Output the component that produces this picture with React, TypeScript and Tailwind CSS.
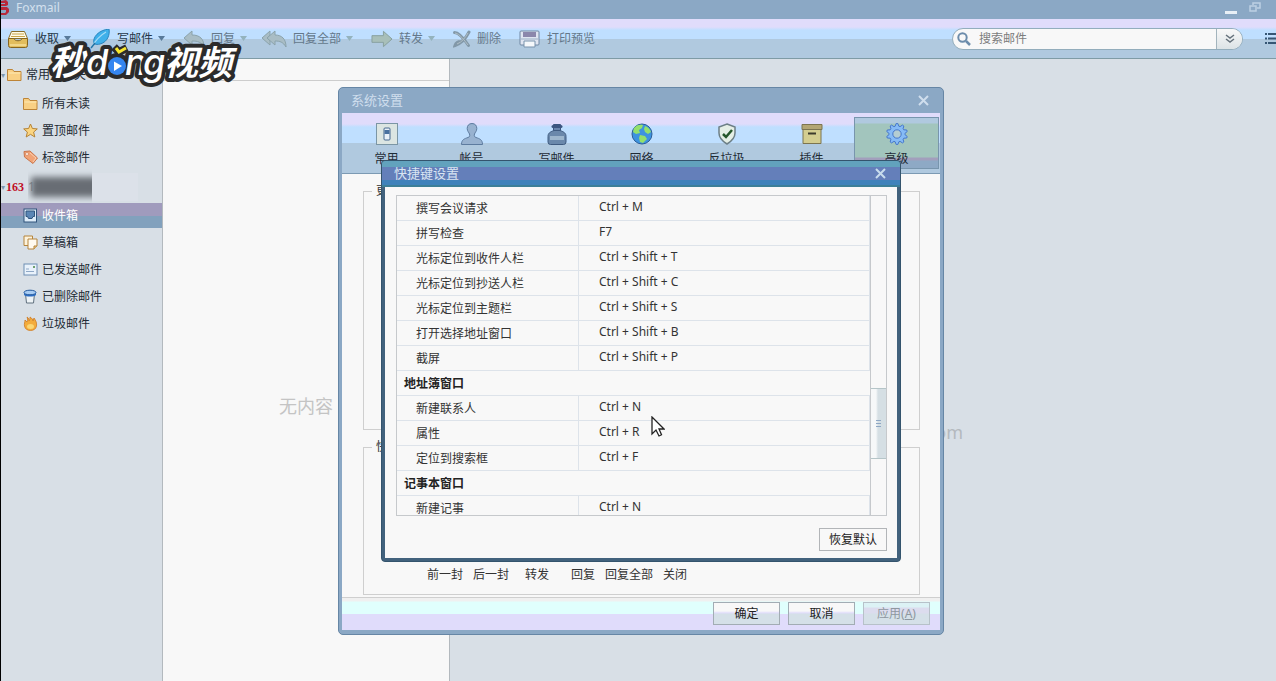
import type { ReactNode } from "react";

type MenuItem = {
  label: string;
  icon: ReactNode;
  caret?: boolean;
  muted?: boolean;
};

type Shortcut = {
  label: string;
  keys?: string;
};

const TrayIcon = () => (
  <svg width="22" height="20" viewBox="0 0 22 20">
    <path d="M4.5 2.5h13l3 7h-19z" fill="#fffbe8" stroke="#8a6d2a" />
    <path d="M5 5h12M4 7.500h14" stroke="#c9a44a" />
    <path d="M1.500 9.500h5.500c.5 3 7.500 3 8 0h5.500v7q0 2-2 2h-15q-2 0-2-2z" fill="#e2bd5c" stroke="#86651f" />
    <path d="M3 16h16" stroke="#f6e09a" strokeWidth="1.500" />
  </svg>
);

const FeatherIcon = () => (
  <svg width="22" height="20" viewBox="0 0 22 20">
    <path d="M5 15C3 8 10 1 20 0c1 5-1 13-9 15-2 .6-4 .4-6 0z" fill="#3fb0ea" stroke="#2884bd" />
    <path d="M2 19C6 12 10 7 17 3" fill="none" stroke="#a5dcf7" strokeWidth="1.200" />
    <path d="M2 19l4-5" stroke="#2673a5" strokeWidth="1.500" />
  </svg>
);

const ReplyIcon = () => (
  <svg width="22" height="18" viewBox="0 0 22 18">
    <path d="M9 1v4c8 0 12 4 12 12-3-5-6-6-12-6v4L1 8z" fill="#a9bdc5" stroke="#8ba3ab" />
  </svg>
);

const ReplyAllIcon = () => (
  <svg width="26" height="18" viewBox="0 0 26 18" className="-ml-1">
    <path d="M9 1L1 8l8 7v-4L6 8l3-3z" fill="#a9bdc5" stroke="#8ba3ab" />
    <path d="M14 1v4c7 0 11 4 11 12-3-5-6-6-11-6v4L6 8z" fill="#a9bdc5" stroke="#8ba3ab" />
  </svg>
);

const ForwardIcon = () => (
  <svg width="23" height="18" viewBox="0 0 23 18">
    <path d="M1 5.500h12V1l9 8-9 8v-4.500H1z" fill="#a8bfb9" stroke="#86a09d" />
  </svg>
);

const DeleteIcon = () => (
  <svg width="18" height="18" viewBox="0 0 18 18">
    <path d="M1.500 2.500c5 0 10 7 14 13M16 2C13 8 9 13 2 15.500c1-3 4-4 6-4" fill="none" stroke="#8298a8" strokeWidth="3" strokeLinecap="round" />
    <path d="M2 3c5 1 9 7 13 12M15 3C12 8 9 12 4 14" fill="none" stroke="#b1bfc6" />
  </svg>
);

const PrintIcon = () => (
  <svg width="22" height="18" viewBox="0 0 22 18">
    <rect x="1" y="1" width="19" height="14" rx="1" fill="#dfe5f1" stroke="#6e86a2" />
    <path d="M4 2h13v5H4z" fill="#8b87ab" />
    <path d="M2 9h17" stroke="#9bb0c4" />
    <path d="M5 11h11v6H5z" fill="#f5f8fb" stroke="#7893ad" />
  </svg>
);

const FolderIcon = () => (
  <svg width="15" height="14" viewBox="0 0 15 14">
    <path d="M.5 12.500v-11h5l1.500 2h7v9z" fill="#f9d084" stroke="#bd8437" />
    <path d="M1.500 5h12" stroke="#fde9b4" />
  </svg>
);

const StarIcon = () => (
  <svg width="15" height="15" viewBox="0 0 15 15">
    <path d="M7.500 1l1.900 4.500 4.900.4-3.700 3.200 1.200 4.900-4.300-2.700L3.200 14l1.200-4.900L.7 5.900l4.900-.4z" fill="#fbd581" stroke="#b58335" />
  </svg>
);

const TagIcon = () => (
  <svg width="15" height="15" viewBox="0 0 15 15">
    <path d="M1 1.500l6-.5 7.500 7-4.500 5.500L1.500 7z" fill="#f1a376" stroke="#c9754c" />
    <path d="M7 3l6 5-3 4" fill="none" stroke="#fbd0b0" />
    <circle cx="4" cy="4" r="1.500" fill="#fff4ec" stroke="#c9754c" strokeWidth=".6" />
  </svg>
);

const InboxIcon = () => (
  <svg width="15" height="15" viewBox="0 0 15 15">
    <rect x="1" y="1" width="12.500" height="13" fill="#dcebf8" stroke="#31547d" />
    <path d="M3 3h8.500v5.500h-1.500l-1 2h-3.500l-1-2H3z" fill="#5b86b5" stroke="#31547d" />
  </svg>
);

const DraftIcon = () => (
  <svg width="15" height="15" viewBox="0 0 15 15">
    <path d="M1 1h8.500v9.500H1z" fill="#fdf3dc" stroke="#b5843c" />
    <path d="M5 4h9v7l-3 3H5z" fill="#fffaf0" stroke="#b5843c" />
    <path d="M14 11h-3v3" fill="#e9c98c" stroke="#b5843c" />
  </svg>
);

const SentIcon = () => (
  <svg width="15" height="13" viewBox="0 0 15 13">
    <rect x="1" y="1" width="13" height="11" fill="#e9f2fb" stroke="#6f8fb3" />
    <path d="M3 6h3M3 8.500h8" stroke="#8fa8c6" />
    <path d="M10 3h2v2h-2z" fill="#6fa06c" />
  </svg>
);

const TrashIcon = () => (
  <svg width="15" height="15" viewBox="0 0 15 15">
    <path d="M2.500 5l1 9h7l1-9z" fill="#eef3f6" stroke="#60707e" />
    <path d="M1 3.500v2.500c2 2 10 2 12 0V3.500z" fill="#2f70c6" />
    <ellipse cx="7" cy="3.500" rx="6" ry="2.300" fill="#a9cdf4" stroke="#245a9e" />
  </svg>
);

const FlameIcon = () => (
  <svg width="15" height="15" viewBox="0 0 15 15">
    <path d="M4 1c2 1 2 3 2 4 1-1 1-3 1-4 2 1 3 3 3 4l1-3c2 3 3 5 2.500 8-.5 3-3 4.500-6 4.500S2 13 1.500 10C1 8 2 6 2 4l2 2c.8-2 .6-4 0-5z" fill="#f3ac3c" stroke="#cf7c24" strokeWidth=".8" />
    <ellipse cx="7.500" cy="10.500" rx="3.500" ry="2.500" fill="#fbd774" />
  </svg>
);

const CloseIcon = () => (
  <svg width="11" height="11" viewBox="0 0 11 11">
    <path d="M1 1l9 9M10 1l-9 9" stroke="currentColor" strokeWidth="2" />
  </svg>
);

const GEAR_TEETH = 10;

// four points per tooth: two on the rim, two on the root circle
const gearPoints = Array.from({ length: GEAR_TEETH * 4 }, (_, i) => {
  const radius = i % 4 < 2 ? 10.500 : 8;
  const angle = ((i - 0.500) / (GEAR_TEETH * 4)) * Math.PI * 2 - Math.PI / 2;
  return `${(12 + radius * Math.cos(angle)).toFixed(2)},${(12 + radius * Math.sin(angle)).toFixed(2)}`;
}).join(" ");

const menuItems: MenuItem[] = [
  { label: "收取", icon: <TrayIcon />, caret: true },
  { label: "写邮件", icon: <FeatherIcon />, caret: true },
  { label: "回复", icon: <ReplyIcon />, caret: true, muted: true },
  { label: "回复全部", icon: <ReplyAllIcon />, caret: true, muted: true },
  { label: "转发", icon: <ForwardIcon />, caret: true, muted: true },
  { label: "删除", icon: <DeleteIcon />, muted: true },
  { label: "打印预览", icon: <PrintIcon />, muted: true }
];

const commonFolders = [
  { label: "所有未读", icon: <FolderIcon /> },
  { label: "置顶邮件", icon: <StarIcon /> },
  { label: "标签邮件", icon: <TagIcon /> }
];

const mailFolders = [
  { label: "收件箱", icon: <InboxIcon />, active: true },
  { label: "草稿箱", icon: <DraftIcon /> },
  { label: "已发送邮件", icon: <SentIcon /> },
  { label: "已删除邮件", icon: <TrashIcon /> },
  { label: "垃圾邮件", icon: <FlameIcon /> }
];

const settingTabs = [
  {
    label: "常用",
    icon: (
      <>
        <rect x="1.500" y="1.500" width="21" height="21" fill="#dbe5e2" stroke="#7b96a5" />
        <rect x="9" y="6" width="6" height="12" rx="1" fill="#e8f0f8" stroke="#47688f" />
        <path d="M9.500 8h5v4h-5z" fill="#48709f" />
      </>
    )
  },
  {
    label: "帐号",
    icon: (
      <path
        d="M12 1.500c3.300 0 4.800 2.300 4.800 5S15 10.500 14.500 12c-.6 2 0 3 1.500 3.500 3.500 1.200 6.500 2 6.500 7h-21c0-5 3-5.800 6.500-7 1.500-.5 2.100-1.500 1.500-3.500C9 10.500 7.200 9.200 7.200 6.500s1.500-5 4.800-5z"
        fill="#98b2d0"
        stroke="#5d7b9f"
      />
    )
  },
  {
    label: "写邮件",
    icon: (
      <>
        <path d="M8.500 2.500h7v6h-7z" fill="#6a86ad" stroke="#3c5680" />
        <path d="M9 8.500h6c4.500 1.500 6 3 6 6V20q0 2.500-2.500 2.500h-13Q3 22.500 3 20v-5.500c0-3 1.500-4.500 6-6z" fill="#6a88ab" stroke="#3f5b80" />
        <path d="M8 4.500h8" stroke="#3c5680" strokeWidth="3" strokeLinecap="round" />
        <path d="M5 14h14v4H5z" fill="#9db6cd" />
      </>
    )
  },
  {
    label: "网络",
    icon: (
      <>
        <circle cx="12" cy="12" r="10" fill="#3d93e0" stroke="#2b5d96" />
        <path d="M4 6c2-3 6-4 9-3l-1 3-3 2 1 3-4 1-3-2zM15 4c3 1 5 3 6 6l-3 2-3-2-1-3zM10 13l5 1 2 3-4 4-3-1-1-4z" fill="#93e06c" />
      </>
    )
  },
  {
    label: "反垃圾",
    icon: (
      <>
        <path d="M12 2l8 3v6c0 5-3 8-8 11-5-3-8-6-8-11V5z" fill="#e5efe6" stroke="#6d7f86" strokeWidth="1.500" />
        <path d="M8 12l3 3 6-7" fill="none" stroke="#26572c" strokeWidth="2.500" />
      </>
    )
  },
  {
    label: "插件",
    icon: (
      <>
        <path d="M3 7h18v14.500H3z" fill="#d3cd90" stroke="#7c7550" />
        <path d="M2 2.500h20v5H2z" fill="#b3a673" stroke="#7c7550" />
        <path d="M8 11.500h8" stroke="#3c3a2c" strokeWidth="2" />
      </>
    )
  },
  {
    label: "高级",
    icon: (
      <>
        <polygon points={gearPoints} fill="#86bbf6" stroke="#4577cc" strokeLinejoin="round" />
        <circle cx="12" cy="12" r="4.200" fill="#b4cdd2" stroke="#4577cc" />
      </>
    ),
    active: true
  }
];

const shortcuts: Shortcut[] = [
  { label: "撰写会议请求", keys: "Ctrl + M" },
  { label: "拼写检查", keys: "F7" },
  { label: "光标定位到收件人栏", keys: "Ctrl + Shift + T" },
  { label: "光标定位到抄送人栏", keys: "Ctrl + Shift + C" },
  { label: "光标定位到主题栏", keys: "Ctrl + Shift + S" },
  { label: "打开选择地址窗口", keys: "Ctrl + Shift + B" },
  { label: "截屏", keys: "Ctrl + Shift + P" },
  { label: "地址簿窗口" },
  { label: "新建联系人", keys: "Ctrl + N" },
  { label: "属性", keys: "Ctrl + R" },
  { label: "定位到搜索框", keys: "Ctrl + F" },
  { label: "记事本窗口" },
  { label: "新建记事", keys: "Ctrl + N" }
];

function TitleBar() {
  return (
    <header className="flex h-[19px] shrink-0 items-center bg-[#8ba8c5] pb-1 text-[#d3e0ee]">
      <svg width="8" height="15" viewBox="0 0 8 15" className="mr-[7px]">
        <path d="M0 1l5-1 2 2v3L5 6H0V4h4V3H0zM0 7h6l2 2v3l-3 3H0v-2h4l1-1v-2H0z" fill="#b8283a" />
      </svg>
      <span className="text-[12px] leading-4">Foxmail</span>
      <div className="ml-auto flex items-center gap-3 pr-[15px]">
        <button aria-label="最小化" className="flex h-4 w-3 items-end pb-[2px]">
          <span className="h-[3px] w-full bg-[#e8eff6]" />
        </button>
        <button aria-label="还原">
          <svg width="12" height="11" viewBox="0 0 12 11" fill="none" stroke="#bdd0e3" strokeWidth="1.500">
            <path d="M4 3V1h7v5H8" />
            <path d="M1 4h6v5H1z" />
          </svg>
        </button>
      </div>
    </header>
  );
}

function Toolbar() {
  return (
    <div className="flex h-10 shrink-0 items-center border-b border-[#7f9ba5] bg-[linear-gradient(#e0dcfb_0_8px,#bfdfff_11px_20px,#b0c9df_20px)] pl-[6px]">
      <nav className="flex items-center gap-[18px]">
        {menuItems.map((item) => (
          <button
            key={item.label}
            className={`flex shrink-0 items-center text-[12px] leading-4 ${item.muted ? "text-[#64788a]" : "text-[#26384a]"}`}
          >
            <span className={`mr-[6px] flex ${item.label === "删除" ? "w-[18px]" : "w-[22px]"}`}>{item.icon}</span>
            {item.label}
            {item.caret ? (
              <svg width="7" height="5" viewBox="0 0 7 5" className="ml-[5px]">
                <path d="M0 0h7L3.500 5z" fill={item.muted ? "#94b3bd" : "#587a9a"} />
              </svg>
            ) : null}
          </button>
        ))}
      </nav>
      <div className="ml-auto flex h-[22px] w-[291px] items-center overflow-hidden rounded-full border border-[#93adbc] bg-[#f8f8f8]">
        <svg width="14" height="14" viewBox="0 0 14 14" className="ml-[4px] shrink-0">
          <circle cx="5.500" cy="5.500" r="4.200" fill="none" stroke="#6c8cab" strokeWidth="2" />
          <path d="M9 9l4 4" stroke="#6c8cab" strokeWidth="2.500" />
        </svg>
        <input
          aria-label="搜索邮件"
          placeholder="搜索邮件"
          className="ml-2 min-w-0 flex-1 bg-transparent text-[12px] leading-4 outline-none placeholder:text-[#7d7d7d]"
        />
        <button
          aria-label="搜索选项"
          className="flex h-full w-[26px] items-center justify-center border-l border-[#a3b4bd] bg-[linear-gradient(#f8f8f8,#dce3e6)]"
        >
          <svg width="10" height="10" viewBox="0 0 10 10" fill="none" stroke="#66727c" strokeWidth="1.500">
            <path d="M1 1l4 3 4-3M1 5l4 3 4-3" />
          </svg>
        </button>
      </div>
      <button aria-label="菜单" className="ml-[21px] shrink-0">
        <svg width="12" height="13" viewBox="0 0 12 13" stroke="#365674" strokeWidth="2">
          <path d="M1 2h2M4 2h8M1 6.500h2M4 6.500h8M1 11h2M4 11h8" />
        </svg>
      </button>
    </div>
  );
}

function FolderRow({ label, icon, active = false }: { label: string; icon: ReactNode; active?: boolean }) {
  return (
    <li className="py-px">
      <a
        href="#"
        className={`flex h-[25px] items-center gap-1 pl-[22px] text-[12px] leading-4 ${
          active ? "bg-[linear-gradient(#a09bbd_0_50%,#82a1bd_50%)] text-white" : "text-[#222a34]"
        }`}
      >
        <span className="w-[15px]">{icon}</span>
        {label}
      </a>
    </li>
  );
}

function Sidebar() {
  return (
    <aside className="w-[162px] shrink-0 border-r border-[#b3b9be]">
      <div className="flex h-[31px] items-center text-[12px] leading-4 text-[#222a34]">
        <span className="w-[6px] text-[8px] text-[#7f97ad]">▾</span>
        <span className="mr-1 w-[15px]">
          <FolderIcon />
        </span>
        常用文件夹
      </div>
      <ul>
        {commonFolders.map((folder) => (
          <FolderRow key={folder.label} {...folder} />
        ))}
      </ul>
      <div className="flex h-[31px] items-center">
        <span className="w-[5px] text-[8px] text-[#7f97ad]">▾</span>
        <span className="font-['Liberation_Serif'] text-[12px] font-bold leading-4 text-[#c01028]">163</span>
        <span className="ml-1 flex flex-1 items-center">
          <span className="flex w-[64px] items-center overflow-x-clip text-[12px] leading-4 text-[#8a8f96]">
            1
            <span className="-ml-1 h-5 w-20 shrink-0 bg-[#686d74] blur-[3px]" />
          </span>
          <span className="h-7 w-[46px] bg-[#dce1e9]" />
        </span>
      </div>
      <ul>
        {mailFolders.map((folder) => (
          <FolderRow key={folder.label} {...folder} />
        ))}
      </ul>
    </aside>
  );
}

function ShortcutDialog() {
  return (
    <section
      aria-label="快捷键设置"
      className="absolute left-[380px] top-[160px] w-[520px] rounded-[4px] border border-[#34546d] bg-[#42627d]"
    >
      <div className="flex h-[26px] items-center justify-between rounded-t-[3px] border-b-2 border-[#3c7f98] bg-[linear-gradient(#62a2bd_0_6px,#647fba_6px_19px,#3f82bb_19px)] pl-3 pr-[14px] text-[#d9e5f2]">
        <h2 className="text-[13px] leading-4">快捷键设置</h2>
        <button aria-label="关闭" className="text-[#c8dced]">
          <CloseIcon />
        </button>
      </div>
      <div className="mx-[3px] mb-[3px] bg-[#f8f8f8] pb-[7px] pl-[11px] pr-[10px] pt-2">
        <div className="flex h-[321px] overflow-hidden border border-[#c6c9cc]">
          <table className="h-fit flex-1 table-fixed border-separate border-spacing-0 text-[12px] leading-4 text-[#333]">
            <colgroup>
              <col className="w-[182px]" />
              <col />
            </colgroup>
            <tbody>
              {shortcuts.map((item, index) =>
                item.keys ? (
                  <tr key={index} className="h-[25px]">
                    <td className="border-b border-r border-[#dde3ea] pb-0 pl-[19px] pt-px">{item.label}</td>
                    <td className="border-b border-r border-[#dde3ea] pb-[2px] pl-5 pt-0">{item.keys}</td>
                  </tr>
                ) : (
                  <tr key={index} className="h-[25px]">
                    <th colSpan={2} className="border-b border-[#dde3ea] pb-0 pl-[7px] pt-px text-left font-bold text-[#222]">
                      {item.label}
                    </th>
                  </tr>
                )
              )}
            </tbody>
          </table>
          <div className="w-4 border-l border-[#c6c9cc] pt-[192px]">
            <div className="flex h-[71px] flex-col items-center justify-center gap-[2px] border-y border-[#b5c5c8] bg-[linear-gradient(90deg,#f6f8f9_0_5px,#d5dfe4_7px)]">
              <span className="h-px w-[5px] bg-[#8ea7c4]" />
              <span className="h-px w-[5px] bg-[#8ea7c4]" />
              <span className="h-px w-[5px] bg-[#8ea7c4]" />
            </div>
          </div>
        </div>
        <div className="mt-3 flex justify-end">
          <button className="h-[23px] w-[68px] border border-[#b2b5b8] bg-[#f8f8f8] text-[12px] leading-4 text-[#222]">
            恢复默认
          </button>
        </div>
      </div>
    </section>
  );
}

function SettingsDialog() {
  return (
    <section
      aria-label="系统设置"
      className="absolute left-[337px] top-[87px] w-[606px] rounded-[5px] border border-[#6686a5] bg-[#8ba8c5] px-[3px] pb-1"
    >
      <div className="flex h-[25px] items-center justify-between pb-px pl-[9px] pr-[11px] text-[#cfdeed]">
        <h2 className="text-[13px] leading-4">系统设置</h2>
        <button aria-label="关闭">
          <CloseIcon />
        </button>
      </div>
      <div
        role="tablist"
        className="grid h-[61px] grid-cols-7 border-b border-[#7c9ab3] bg-[linear-gradient(#e0dcfb_0_11px,#bfdfff_14px_30px,#b0c9df_30px)] pl-[2px] pr-px pt-1"
      >
        {settingTabs.map((tab) => (
          <button
            key={tab.label}
            role="tab"
            aria-selected={!!tab.active}
            className={`flex h-[52px] flex-col items-center border pt-1 text-[12px] leading-4 text-[#1f2b36] ${
              tab.active
                ? "border-[#7895ad] bg-[linear-gradient(#b0c9df_0_5px,#a2c5bd_6px_39px,#a29fbc_40px_42px,#8ea9c5_43px)]"
                : "border-transparent"
            }`}
          >
            <svg width="24" height="24" viewBox="0 0 24 24" className="mb-[5px] shrink-0">
              {tab.icon}
            </svg>
            {tab.label}
          </button>
        ))}
      </div>
      <div className="bg-[#f8f8f8] pb-[2px] pl-[21px] pr-5 pt-[9px] text-[12px] leading-4 text-[#333]">
        <fieldset className="h-[247px] border border-[#cfcfcf] px-2">
          <legend className="px-1">更新设置</legend>
        </fieldset>
        <fieldset className="mt-[9px] h-[156px] border border-[#cfcfcf] px-2">
          <legend className="px-1">快捷键</legend>
          <div className="ml-[50px] grid w-[276px] grid-cols-6 pt-28">
            {["前一封", "后一封", "转发", "回复", "回复全部", "关闭"].map((name) => (
              <span key={name} className="flex justify-center whitespace-nowrap">
                {name}
              </span>
            ))}
          </div>
        </fieldset>
      </div>
      <div className="flex h-[33px] justify-end gap-2 border-t border-[#cfcfcf] bg-[linear-gradient(#f0f0f0_0_3px,#e0fffd_4px_16px,#e0dcfb_16px)] pr-[10px] pt-1 text-[12px] leading-4 text-[#222]">
        <button className="h-[23px] w-[67px] border border-[#a2acb4] bg-[linear-gradient(#f8f8f8_0_8px,#e0dcfb_10px,#d5e0e8_11px)]">
          确定
        </button>
        <button className="h-[23px] w-[67px] border border-[#a2acb4] bg-[linear-gradient(#f8f8f8_0_8px,#e0dcfb_10px,#d5e0e8_11px)]">
          取消
        </button>
        <button
          disabled
          className="h-[23px] w-[67px] border border-[#b7c1c9] bg-[linear-gradient(#dcf2f5_0_4px,#dcdcee_5px_10px,#d5e0e8_11px)] text-[#8e979f]"
        >
          应用(<u>A</u>)
        </button>
      </div>
    </section>
  );
}

const logoGlyphs = [
  { text: "秒", x: 3, size: 35 },
  { text: "d", x: 39, size: 36 },
  { text: "n", x: 78, size: 36 },
  { text: "g", x: 96, size: 36 },
  { text: "视频", x: 117, size: 34 }
];

function VideoLogo() {
  return (
    <svg
      width="196"
      height="52"
      viewBox="0 0 196 52"
      role="img"
      aria-label="秒dong视频"
      className="pointer-events-none absolute left-[46px] top-10"
    >
      <circle cx="70" cy="26" r="13" fill="#2b2b2b" />
      <path d="M67 7l5 5 8-4" fill="none" stroke="#2b2b2b" strokeWidth="8" />
      <g
        fill="#fff"
        stroke="#2b2b2b"
        strokeWidth="8"
        strokeLinejoin="round"
        paintOrder="stroke"
        fontWeight="500"
        fontStyle="italic"
        className="font-['Inter','Noto_Sans_CJK_SC',sans-serif]"
      >
        {logoGlyphs.map((glyph) => (
          <text key={glyph.text} x={glyph.x} y="35" fontSize={glyph.size} fontWeight={glyph.size === 36 ? 500 : 700}>
            {glyph.text}
          </text>
        ))}
      </g>
      <circle cx="70" cy="26" r="9" fill="#3586f0" />
      <path d="M67 21.500l8 4.500-8 5z" fill="#fff" />
      <path d="M69 8l3 4 7-4" fill="none" stroke="#f7e72e" strokeWidth="3" />
    </svg>
  );
}

export default function App() {
  return (
    <div className="relative flex h-screen flex-col overflow-hidden border-l border-black bg-[#d8dfe6] font-['Noto_Sans','Noto_Sans_CJK_SC',sans-serif]">
      <TitleBar />
      <Toolbar />
      <main className="flex flex-1">
        <Sidebar />
        <section className="flex w-[287px] shrink-0 flex-col border-r border-[#b3b9be] bg-[#f8f8f8]">
          <div className="h-[22px] border-b border-[#cdcdcd]" />
          <p className="flex-1 pt-[313px] text-center text-[18px] leading-6 text-[#c4c4c4]">无内容</p>
        </section>
        <section className="flex-1">
          <p className="w-[513px] pt-[361px] text-right text-[18px] leading-6 text-[#b4b9be]">.com</p>
        </section>
      </main>
      <SettingsDialog />
      <ShortcutDialog />
      <VideoLogo />
      <svg width="14" height="22" viewBox="0 0 14 22" className="pointer-events-none absolute left-[650px] top-[416px]">
        <path d="M1 1v17l4-4 3 6 2.500-1.200L8 13h5z" fill="#fff" stroke="#222" strokeWidth="1.300" />
      </svg>
    </div>
  );
}
